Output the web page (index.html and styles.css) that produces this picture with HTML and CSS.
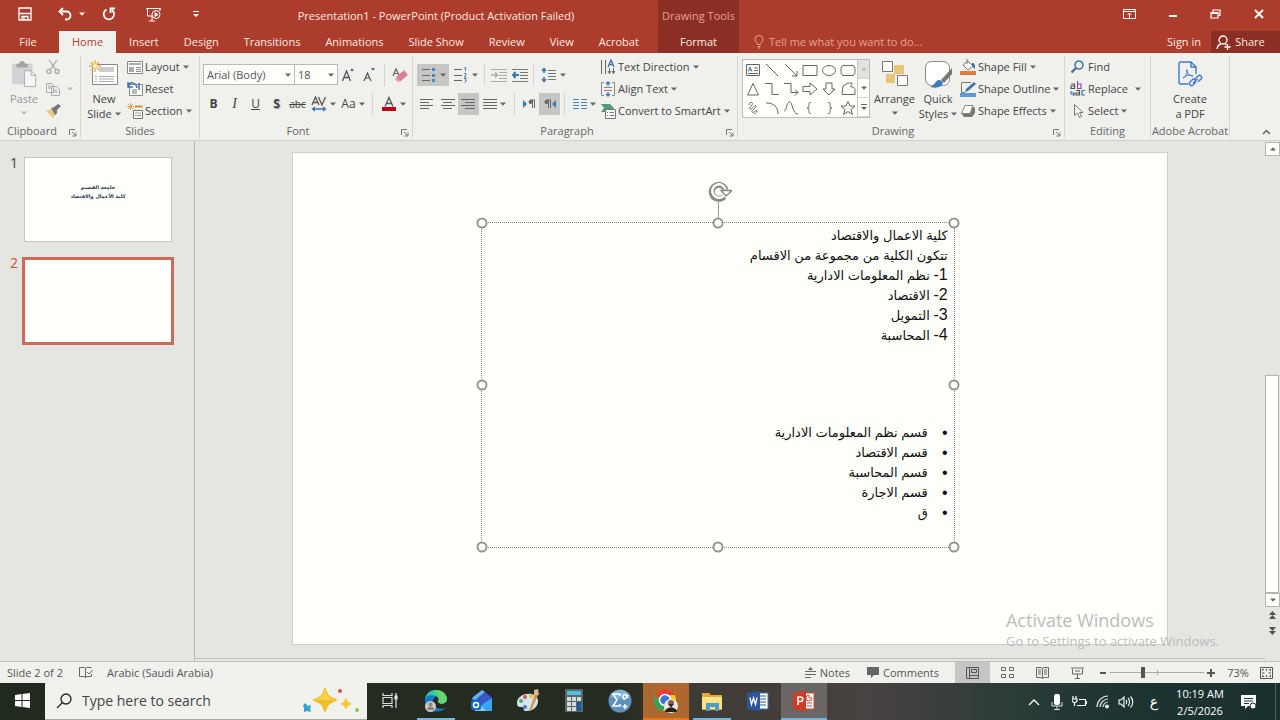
FILE: index.html
```html
<!DOCTYPE html>
<html lang="en">
<head>
<meta charset="utf-8">
<title>Presentation1 - PowerPoint</title>
<link rel="stylesheet" href="styles.css">
</head>
<body>
<svg class="sprite" aria-hidden="true">
  <symbol id="caret" viewBox="0 0 6 4"><path d="M0 0.5h6L3 3.7z" fill="currentColor"/></symbol>
  <symbol id="launch" viewBox="0 0 8 8"><path d="M0.5 6V0.5H6M3 3l3.5 3.5M7 3.5V7H3.5" fill="none" stroke="#777" /></symbol>
</svg>
<div class="app">
  <header class="header">
    <div class="head-left">
      <div class="title-row">
        <div class="qat">
          <button class="qbtn save" aria-label="Save"><svg width="14" height="14" viewBox="0 0 14 14" fill="none" stroke="#fff" stroke-width="1.3"><path d="M1 1h12v12H1zM1 6.500h12M4 13V9.500h6V13M6 10v3"/></svg></button>
          <button class="qbtn undo" aria-label="Undo"><svg width="14" height="14" viewBox="0 0 14 14" fill="none" stroke="#fff" stroke-width="1.8"><path d="M5 1L1.5 4.5 5 8M2 4.5h6.500a4 4 0 0 1 0 8H7"/></svg><svg class="caret"><use href="#caret"/></svg></button>
          <button class="qbtn redo" aria-label="Repeat"><svg width="14" height="14" viewBox="0 0 14 14" fill="none" stroke="#fff" stroke-width="1.8"><path d="M4.500 2.500A5.200 5.200 0 1 0 10 3M13 1.500H8.500v4.500"/></svg></button>
          <button class="qbtn show" aria-label="Start From Beginning"><svg width="17" height="15" viewBox="0 0 17 15" fill="none" stroke="#fff"><path d="M1 1.500h15M2.500 2v7H7M15 2v2M4 14h6M7 9v5"/><circle cx="11" cy="7.500" r="4"/><path d="M10 5.500v4l3-2z" fill="#fff"/></svg></button>
          <button class="qbtn more" aria-label="Customize Quick Access Toolbar"><svg width="6" height="8" viewBox="0 0 6 8"><path d="M0 1h6v1H0zM0 4h6L3 7z" fill="#fff"/></svg></button>
        </div>
        <h1 class="title">Presentation1 - PowerPoint (Product Activation Failed)</h1>
      </div>
      <nav class="tabs">
        <button class="tab file">File</button><button class="tab active">Home</button><button class="tab">Insert</button><button class="tab">Design</button><button class="tab">Transitions</button><button class="tab">Animations</button><button class="tab">Slide Show</button><button class="tab">Review</button><button class="tab">View</button><button class="tab">Acrobat</button>
      </nav>
    </div>
    <div class="context"><span class="ctx-title">Drawing Tools</span><button class="ctx-tab">Format</button></div>
    <div class="head-right">
      <div class="window-row">
        <button class="wbtn" aria-label="Ribbon Display Options"><svg width="13" height="10" viewBox="0 0 13 10" fill="none" stroke="#fff"><path d="M.5.5h12v9H.5zM1 2.500h11M6.500 9V4.500M4.500 6l2-2 2 2"/></svg></button>
        <button class="wbtn" aria-label="Minimize"><svg width="10" height="10" viewBox="0 0 10 10"><path d="M1 6h8v2H1z" fill="#fff"/></svg></button>
        <button class="wbtn" aria-label="Restore Down"><svg width="11" height="10" viewBox="0 0 11 10" fill="none" stroke="#fff" stroke-width="1.200"><path d="M1 3.500h7v5.500H1zM3 3V1h7v5.500H8M1 4.500h7"/></svg></button>
        <button class="wbtn" aria-label="Close"><svg width="10" height="10" viewBox="0 0 10 10" stroke="#fff" stroke-width="1.900"><path d="M1 1l8 8M9 1L1 9"/></svg></button>
      </div>
      <div class="tell-row">
        <button class="tell"><svg width="10" height="14" viewBox="0 0 10 14" fill="none" stroke="#e9a193"><path d="M3.500 9.500C3.500 7.500 1 7 1 4.500a4 4 0 0 1 8 0C9 7 6.500 7.500 6.500 9.500zM3.500 11.500h3M4 13h2"/></svg><span>Tell me what you want to do...</span></button>
        <button class="signin">Sign in</button>
        <button class="share"><svg width="15" height="15" viewBox="0 0 15 15" fill="none" stroke="#fff" stroke-width="1.300"><circle cx="7" cy="5" r="4"/><path d="M1 14c.5-3 2-4.500 4-5M9 9l1.500 1M11.500 9v6M8.500 12h6"/></svg><span>Share</span></button>
      </div>
    </div>
  </header>

  <section class="ribbon" aria-label="Home">
    <div class="group g-clip has-launch">
      <div class="body">
        <button class="big paste"><svg width="28" height="30" viewBox="0 0 28 30"><path d="M1 4h22v22H1z" fill="#d3d2d6"/><path d="M6 4h3a3 3 0 0 1 6 0h3v4H6z" fill="#a5a5a5"/><path d="M14.500 11.500h7l5 5v12h-12z" fill="#f5f5f5" stroke="#aaa"/><path d="M21.500 11.500v5h5" fill="none" stroke="#aaa"/></svg><span>Paste</span><svg class="caret"><use href="#caret"/></svg></button>
        <div class="stack">
          <button class="row" aria-label="Cut"><svg width="16" height="16" viewBox="0 0 16 16" fill="none" stroke="#aaa" stroke-width="1.300"><path d="M4 1l7 10M12 1L5 11"/><circle cx="4" cy="12.500" r="2"/><circle cx="12" cy="12.500" r="2"/></svg></button>
          <button class="row dim" aria-label="Copy"><svg width="16" height="16" viewBox="0 0 16 16" fill="#f2f2f2" stroke="#aaa"><path d="M1.500 2.500h5l2 2v7h-7zM6.500 5.500h5l3 3v6h-8z"/><path d="M8 9h4M8 11h5M3 5h3M3 7h3"/></svg><svg class="caret"><use href="#caret"/></svg></button>
          <button class="row" aria-label="Format Painter"><svg width="16" height="16" viewBox="0 0 16 16"><path d="M1 8l5-2 5 5-3 4z" fill="#ebc985"/><path d="M6 5l3-1 4-3 3 2-4 4v3l-2 2z" fill="#777"/></svg></button>
        </div>
      </div>
      <div class="glabel">Clipboard</div><button class="launch" aria-label="Clipboard options"><svg width="8" height="8"><use href="#launch"/></svg></button>
    </div>

    <div class="group g-slides">
      <div class="body">
        <button class="big newslide"><svg width="30" height="28" viewBox="0 0 30 28"><path d="M3.500 4.500h25v20h-25z" fill="#fff" stroke="#888"/><path d="M10 7h15v5H10z" fill="#ccc"/><path d="M6 16.500h2M10 16.500h15M6 19h2M10 19h15M6 21.500h2M10 21.500h15" stroke="#aaa"/><path d="M6 0v12M0 6h12M2 2l8 8M10 2l-8 8" stroke="#eab65c" stroke-width="1.500"/><circle cx="6" cy="6" r="2" fill="#fff3c8"/></svg><span>New</span><span class="two">Slide <svg class="caret"><use href="#caret"/></svg></span></button>
        <div class="stack">
          <button class="row"><svg width="16" height="16" viewBox="0 0 16 16"><path d="M.5 2.500h15v12H.5z" fill="#fff" stroke="#888"/><path d="M2 4h12v2H2zM2 8h5v5H2z" fill="#aaa"/><path d="M9 8.500h5M9 10.500h5M9 12.500h5" stroke="#888"/></svg><span>Layout</span><svg class="caret"><use href="#caret"/></svg></button>
          <button class="row"><svg width="16" height="16" viewBox="0 0 16 16"><path d="M2.500 3.500h13v11h-13z" fill="#fff" stroke="#888"/><path d="M5 8h5v5H5z" fill="#bbb"/><path d="M12 9V2M1 5c2-5 8-4 9 2M1 1v5h5" fill="none" stroke="#3d75ad" stroke-width="1.500"/></svg><span>Reset</span></button>
          <button class="row"><svg width="16" height="16" viewBox="0 0 16 16"><path d="M8 3.500h7.500" stroke="#d98c3c" stroke-width="2"/><path d="M6.500 7.500h9v8h-9z" fill="#fff" stroke="#777"/><path d="M8 10h6M8 12.500h6" stroke="#999"/><path d="M3.500 0v7M0 3.500h7M1 1l5 5M6 1L1 6" stroke="#e8a552"/></svg><span>Section</span><svg class="caret"><use href="#caret"/></svg></button>
        </div>
      </div>
      <div class="glabel">Slides</div>
    </div>

    <div class="group g-font has-launch">
      <div class="body lines">
        <div class="line">
          <label class="combo wide"><select aria-label="Font"><option>Arial (Body)</option></select><svg class="caret"><use href="#caret"/></svg></label><label class="combo"><select aria-label="Font size"><option>18</option></select><svg class="caret"><use href="#caret"/></svg></label>
          <button class="tool" aria-label="Increase font size"><svg width="15" height="16" viewBox="0 0 15 16" fill="none" stroke="#555" stroke-width="1.300"><path d="M1.500 14L5.500 4l4 10M3 10.500h5"/><path d="M9 4l2-3 2 3z" fill="#3d75ad" stroke="none"/></svg></button>
          <button class="tool" aria-label="Decrease font size"><svg width="15" height="16" viewBox="0 0 15 16" fill="none" stroke="#555" stroke-width="1.200"><path d="M2 14l3.500-8L9 14M3 11h5"/><path d="M9 1l2 3 2-3z" fill="#3d75ad" stroke="none"/></svg></button>
          <i class="sep"></i>
          <button class="tool" aria-label="Clear formatting"><svg width="16" height="16" viewBox="0 0 16 16" fill="none" stroke="#666" stroke-width="1.200"><path d="M1 9l3-7 3 6M2 6.500h4"/><path d="M5 10l7-6 3 4-7 6z" fill="#dd7f9b" stroke="#d77e97"/><path d="M3.500 11l3 3.500" stroke="#e3a2b3" stroke-width="2"/></svg></button>
        </div>
        <div class="line">
          <button class="tool t"><b>B</b></button><button class="tool t it"><i>I</i></button><button class="tool t"><u>U</u></button><button class="tool t sh">S</button><button class="tool t st"><s>abc</s></button>
          <button class="tool drop av" aria-label="Character spacing"><svg width="16" height="16" viewBox="0 0 16 16" fill="none" stroke="#555" stroke-width="1.300"><path d="M1 9l3.500-8L8 9M2.500 6.500h4M7.500 1L11 9l3.500-8"/><path d="M2 13h12M4 11l-2.500 2L4 15M12 11l2.500 2-2.500 2" stroke="#3d75ad"/></svg><svg class="caret"><use href="#caret"/></svg></button>
          <button class="tool drop aa">Aa<svg class="caret"><use href="#caret"/></svg></button>
          <i class="sep"></i>
          <button class="tool drop" aria-label="Font color"><svg width="16" height="16" viewBox="0 0 16 16" fill="none" stroke="#555" stroke-width="1.300"><path d="M4 10.500l4-9 4 9M5.500 7.500h5"/><path d="M1 11h14v4H1z" fill="#c00010" stroke="none"/></svg><svg class="caret"><use href="#caret"/></svg></button>
        </div>
      </div>
      <div class="glabel">Font</div><button class="launch" aria-label="Font options"><svg width="8" height="8"><use href="#launch"/></svg></button>
    </div>

    <div class="group g-para has-launch">
      <div class="body">
        <div class="lines">
          <div class="line">
            <button class="tool drop on" aria-label="Bullets"><svg width="16" height="16" viewBox="0 0 16 16"><path d="M1 2.500h8M1 8.500h8M1 13.500h8" stroke="#666"/><path d="M11 1h3v3h-3zM11 7h3v3h-3zM11 12h3v3h-3z" fill="#4a86b8"/></svg><svg class="caret"><use href="#caret"/></svg></button>
            <button class="tool drop" aria-label="Numbering"><svg width="16" height="16" viewBox="0 0 16 16" fill="none"><path d="M1 2.500h8M1 8.500h8M1 13.500h8" stroke="#666"/><path d="M11 1l1.500-.5V4M11 6.500h2v1.500l-2 2h2.500M11 11.500h2.500L12 13l1.500 1-2 1.500" stroke="#4a86b8"/></svg><svg class="caret"><use href="#caret"/></svg></button>
            <i class="sep tight"></i>
            <button class="tool" aria-label="Decrease list level"><svg width="16" height="14" viewBox="0 0 16 14" fill="none" stroke="#aaa"><path d="M0 1.500h16M8 4.500h8M8 7.500h8M8 10.500h8M0 13.500h16"/><path d="M0 7h6M4 4.500L6.500 7 4 9.500" stroke-width="1.500"/></svg></button>
            <button class="tool" aria-label="Increase list level"><svg width="16" height="14" viewBox="0 0 16 14" fill="none" stroke="#777"><path d="M0 1.500h16M8 4.500h8M8 7.500h8M8 10.500h8M0 13.500h16"/><path d="M7 7H1M3.500 4L1 7l2.500 3" stroke="#3d75ad" stroke-width="2"/></svg></button>
            <i class="sep tight"></i>
            <button class="tool drop" aria-label="Line spacing"><svg width="16" height="16" viewBox="0 0 16 16" fill="none" stroke="#777"><path d="M7 3.500h8M7 6.500h8M7 9.500h8M7 12.500h8"/><path d="M3 2v4M3 10v4M1 4l2-2.500L5 4M1 12l2 2.500L5 12" stroke="#3d75ad" stroke-width="1.500"/></svg><svg class="caret"><use href="#caret"/></svg></button>
          </div>
          <div class="line">
            <button class="tool" aria-label="Align left"><svg width="14" height="12" viewBox="0 0 14 12" stroke="#666"><path d="M0 1.500h13M0 4.500h9M0 7.500h13M0 10.500h9"/></svg></button>
            <button class="tool" aria-label="Center"><svg width="14" height="12" viewBox="0 0 14 12" stroke="#666"><path d="M0 1.500h14M2 4.500h9M0 7.500h14M2 10.500h9"/></svg></button>
            <button class="tool on" aria-label="Align right"><svg width="14" height="12" viewBox="0 0 14 12" stroke="#666"><path d="M0 1.500h14M4 4.500h10M0 7.500h14M4 10.500h10"/></svg></button>
            <button class="tool drop" aria-label="Justify"><svg width="14" height="12" viewBox="0 0 14 12" stroke="#666"><path d="M0 1.500h14M0 4.500h14M0 7.500h14M0 10.500h14"/></svg><svg class="caret"><use href="#caret"/></svg></button>
            <i class="sep"></i>
            <button class="tool" aria-label="Left to right"><svg width="14" height="10" viewBox="0 0 14 10"><path d="M1 1l4 4-4 4z" fill="#3d75ad"/><path d="M8 1h5M10.500 1v8M12.500 1v8" stroke="#666"/><circle cx="8.500" cy="3" r="2" fill="#666"/></svg></button>
            <button class="tool on" aria-label="Right to left"><svg width="14" height="10" viewBox="0 0 14 10"><path d="M13 1L9 5l4 4z" fill="#3d75ad"/><path d="M3 1h5M5.500 1v8M7.500 1v8" stroke="#666"/><circle cx="3.500" cy="3" r="2" fill="#666"/></svg></button>
            <i class="sep"></i>
            <button class="tool drop" aria-label="Columns"><svg width="14" height="12" viewBox="0 0 14 12" stroke="#4a86b8"><path d="M0 1.500h6M8 1.500h6M0 4.500h6M8 4.500h6M0 7.500h6M8 7.500h6M0 10.500h6M8 10.500h6"/></svg><svg class="caret"><use href="#caret"/></svg></button>
          </div>
        </div>
        <div class="stack">
          <button class="row"><svg width="16" height="16" viewBox="0 0 16 16" fill="none" stroke="#666"><path d="M1.500 1v14M5.500 1v14M9.500 9v6M13.500 9v6M8 12l1.500 2.500L11 12M12 12l1.500 2.500L15 12"/><path d="M8 8l3-7 3 7M9 5.500h4" stroke="#3d75ad" stroke-width="1.400"/></svg><span>Text Direction</span><svg class="caret"><use href="#caret"/></svg></button>
          <button class="row"><svg width="16" height="16" viewBox="0 0 16 16" fill="none" stroke="#888"><path d="M4 1.500H1.500v13H4M12 1.500h2.500v13H12M4 6.500h8M4 9.500h8"/><path d="M8 1v4M8 11v4M6 3l2-2 2 2M6 13l2 2 2-2" stroke="#3d75ad" stroke-width="1.300"/></svg><span>Align Text</span><svg class="caret"><use href="#caret"/></svg></button>
          <button class="row"><svg width="16" height="16" viewBox="0 0 16 16"><path d="M1 1h9l4 4-3 4H1l3-4z" fill="#559a7c"/><path d="M5.500 6.500h10v9h-10z" fill="#fff" stroke="#777"/><path d="M7 9.500h1M9.500 9.500H14M7 12.500h1M9.500 12.500H14" stroke="#777"/></svg><span>Convert to SmartArt</span><svg class="caret"><use href="#caret"/></svg></button>
        </div>
      </div>
      <div class="glabel">Paragraph</div><button class="launch" aria-label="Paragraph options"><svg width="8" height="8"><use href="#launch"/></svg></button>
    </div>

    <div class="group g-draw has-launch">
      <div class="body">
        <div class="gallery">
          <div class="shapes">
            <button aria-label="Text box"><svg viewBox="0 0 16 14"><path d="M1.500 1.500h13v11h-13zM9 5h4M9 7.500h4M3 10.500h10"/><path d="M3 8.500L5 4l2 4.500M4 7h2.500" stroke="#3d75ad"/></svg></button><button aria-label="Line"><svg viewBox="0 0 16 14"><path d="M2 1l12 12"/></svg></button><button aria-label="Arrow"><svg viewBox="0 0 16 14"><path d="M2 1l12 12M14 8v5H9"/></svg></button><button aria-label="Rectangle"><svg viewBox="0 0 16 14"><path d="M1 2.500h14v10H1z"/></svg></button><button aria-label="Oval"><svg viewBox="0 0 16 14"><ellipse cx="8" cy="7.500" rx="6.500" ry="5"/></svg></button><button aria-label="Rounded rectangle"><svg viewBox="0 0 16 14"><rect x="1" y="2.500" width="14" height="10" rx="3"/></svg></button>
            <button aria-label="Triangle"><svg viewBox="0 0 16 14"><path d="M8 1.500L13.500 13h-11z"/></svg></button><button aria-label="Elbow"><svg viewBox="0 0 16 14"><path d="M1 1.500h7v11h7"/></svg></button><button aria-label="Elbow arrow"><svg viewBox="0 0 16 14"><path d="M1 1.500h7v9h7M12 7.500l3 3-3 3"/></svg></button><button aria-label="Right arrow"><svg viewBox="0 0 16 14"><path d="M1 4.500h7V1l7 6-7 6V9.500H1z"/></svg></button><button aria-label="Down arrow"><svg viewBox="0 0 16 14"><path d="M5 1h6v6h3l-6 6-6-6h3z"/></svg></button><button aria-label="Freeform"><svg viewBox="0 0 16 14"><path d="M3 4l5-3h4c0 3-3 4 0 4s3 2 3 4v3.500H2z"/></svg></button>
            <button aria-label="Scribble"><svg viewBox="0 0 16 14"><path d="M4 4C4 0 9 1 7 4S3 7 5 8s5-5 6-3-5 4-4 6 5-3 5-1-3 3-3 3"/></svg></button><button aria-label="Arc"><svg viewBox="0 0 16 14"><path d="M2 2c8 0 12 4 12 11"/></svg></button><button aria-label="Curve"><svg viewBox="0 0 16 14"><path d="M1 10C4 10 3 1 6.500 1S9 13 15 13"/></svg></button><button aria-label="Left brace"><svg viewBox="0 0 16 14"><path d="M9 1.500c-3 0-2 2-2 3.500S6 7 5 7c1 0 2 .5 2 2s-1 3.500 2 3.500"/></svg></button><button aria-label="Right brace"><svg viewBox="0 0 16 14"><path d="M7 1.500c3 0 2 2 2 3.500s1 2 2 2c-1 0-2 .5-2 2s1 3.500-2 3.500"/></svg></button><button aria-label="Star"><svg viewBox="0 0 16 14"><path d="M8 .5l2 4.500h5l-4 3.500 1.500 5L8 10.500l-4.500 3 1.500-5L1 5h5z"/></svg></button>
          </div>
          <div class="gscroll"><button class="off" aria-label="Row up"><svg class="caret up"><use href="#caret"/></svg></button><button aria-label="Row down"><svg class="caret"><use href="#caret"/></svg></button><button aria-label="More shapes"><svg width="6" height="7" viewBox="0 0 6 7"><path d="M0 0h6v1H0zM0 3h6L3 6z" fill="#666"/></svg></button></div>
        </div>
        <button class="big arrange"><svg width="26" height="28" viewBox="0 0 26 28"><path d="M12 5h10v9H12zM4 14h9v9H4z" fill="#e9c578"/><path d="M.5 1.500h10v10H.5zM15.500 15.500h10v10h-10z" fill="#fff" stroke="#777"/></svg><span>Arrange</span><svg class="caret"><use href="#caret"/></svg></button>
        <button class="big quick"><svg width="28" height="28" viewBox="0 0 28 28"><rect x="1.500" y="1.500" width="24" height="24" rx="6" fill="#fff" stroke="#888"/><path d="M28 8v6l-8 9-3-3z" fill="#777"/><path d="M6 27c5-1 5-7 9-7s5 4 2 6-7 2-11 1z" fill="#4379b4"/></svg><span>Quick</span><span class="two">Styles <svg class="caret"><use href="#caret"/></svg></span></button>
        <div class="stack">
          <button class="row"><svg width="16" height="16" viewBox="0 0 16 16"><path d="M0 12h16v4H0z" fill="#de7c3c"/><path d="M3 6l5-4 5 5-5 4zM7 5V0" fill="#fff" stroke="#777" /><path d="M12 4c3 0 3 2 3 6-2-1-2-3-3-3z" fill="#3d6da0"/></svg><span>Shape Fill</span><svg class="caret"><use href="#caret"/></svg></button>
          <button class="row"><svg width="16" height="16" viewBox="0 0 16 16"><path d="M0 12h16v4H0z" fill="#5b9bd5"/><path d="M11 1.500H1.500v10H5" fill="none" stroke="#777"/><path d="M5 11l1-3 8-7 2 2-8 7z" fill="#3d75ad"/></svg><span>Shape Outline</span><svg class="caret"><use href="#caret"/></svg></button>
          <button class="row"><svg width="16" height="16" viewBox="0 0 16 16"><path d="M1 10l3 4h8l3-4V5l-3-2z" fill="#777"/><path d="M5 2.500h8l-3 8H1.500z" fill="#fff" stroke="#888"/></svg><span>Shape Effects</span><svg class="caret"><use href="#caret"/></svg></button>
        </div>
      </div>
      <div class="glabel">Drawing</div><button class="launch" aria-label="Drawing options"><svg width="8" height="8"><use href="#launch"/></svg></button>
    </div>

    <div class="group g-edit">
      <div class="body">
        <div class="stack">
          <button class="row"><svg width="16" height="16" viewBox="0 0 16 16" fill="none" stroke="#3d75ad" stroke-width="1.600"><circle cx="9" cy="6" r="4"/><path d="M6 9l-4.500 4.500" stroke-width="2.400"/></svg><span>Find</span></button>
          <button class="row rep"><svg width="16" height="16" viewBox="0 0 16 16" fill="none" stroke="#555" stroke-width="1.200"><path d="M1 3h3.500v4.500H1V5h3.500"/><path d="M7.500 0v7.500H11V3H7.500" stroke="#8e44ad"/><path d="M6 9.500h3.500V14H6v-2h3.500"/><path d="M15 9.500h-3V14h3M1 10v3h3M3 11l1.500 2L3 15" stroke="#3d75ad"/></svg><span>Replace</span><svg class="caret"><use href="#caret"/></svg></button>
          <button class="row"><svg width="16" height="16" viewBox="0 0 16 16"><path d="M4.500 1.500v11l3-2.500 2 4.500 2-1-2-4H13z" fill="#fff" stroke="#777"/></svg><span>Select</span><svg class="caret"><use href="#caret"/></svg></button>
        </div>
      </div>
      <div class="glabel">Editing</div>
    </div>

    <div class="group g-pdf">
      <div class="body">
        <button class="big pdf"><svg width="26" height="28" viewBox="0 0 26 28" fill="none" stroke="#3f78d0" stroke-width="1.400"><path d="M11 24H4a2 2 0 0 1-2-2V4a2 2 0 0 1 2-2h10l5 5v7M14 2v5h5"/><path d="M6 18c4-2 5-6 4-8s-1 6 6 6c-4-2-7 0-10 2z" stroke-width="1"/><path d="M18 19l3-3c2-2 5 1 3 3l-3 3M19 20l-3-1-3 3c-2 2 1 5 3 3l3-3M16 23l5-4"/></svg><span>Create</span><span class="two">a PDF</span></button>
      </div>
      <div class="glabel">Adobe Acrobat</div>
    </div>
    <button class="collapse" aria-label="Collapse the Ribbon"><svg width="9" height="6" viewBox="0 0 9 6" fill="none" stroke="#666" stroke-width="1.500"><path d="M1 5l3.500-3.500L8 5"/></svg></button>
  </section>

  <main class="work">
    <aside class="panel">
      <div class="thumb-row"><span class="num">1</span><button class="thumb"><span class="mini" dir="rtl" lang="ar">جامعة القصيم<br>كلية الأعمال والاقتصاد</span></button></div>
      <div class="thumb-row sel"><span class="num">2</span><button class="thumb" aria-label="Slide 2"></button></div>
    </aside>
    <div class="canvas">
      <div class="slide">
        <div class="textbox">
          <svg class="rot" width="26" height="42" viewBox="0 0 26 42" fill="none"><path d="M12.500 22v20" stroke="#999"/><path d="M18 16.500a7 7 0 1 1 1.500-6.500" stroke="#8a8a88" stroke-width="6"/><path d="M17.500 16a6.700 6.700 0 1 1 2-6.500" stroke="#fffffc" stroke-width="2.500"/><path d="M15 10.500h11l-6 5.500z" fill="#fffffc" stroke="#8a8a88" stroke-width="1.400"/></svg>
          <div class="copy" dir="rtl" lang="ar">
            <p>كلية الاعمال والاقتصاد</p><p>تتكون الكلية من مجموعة من الاقسام</p><p><span class="n">1-</span> نظم المعلومات الادارية</p><p><span class="n">2-</span> الاقتصاد</p><p><span class="n">3-</span> التمويل</p><p><span class="n">4-</span> المحاسبة</p>
            <ul><li>قسم نظم المعلومات الادارية</li><li>قسم الاقتصاد</li><li>قسم المحاسبة</li><li>قسم الاجارة</li><li>ق</li></ul>
          </div>
          <i class="h tl"></i><i class="h tc"></i><i class="h tr"></i><i class="h ml"></i><i class="h mr"></i><i class="h bl"></i><i class="h bc"></i><i class="h br"></i>
        </div>
      </div>
    </div>
    <div class="scroll">
      <button class="sbtn" aria-label="Scroll up"><svg class="caret up"><use href="#caret"/></svg></button>
      <div class="track"><div class="knob"></div></div>
      <button class="sbtn" aria-label="Scroll down"><svg class="caret"><use href="#caret"/></svg></button>
      <button class="jump" aria-label="Previous slide"><svg width="7" height="8" viewBox="0 0 7 8"><path d="M0 4l3.500-4L7 4zM0 8l3.500-4L7 8z" fill="#555"/></svg></button>
      <button class="jump" aria-label="Next slide"><svg width="7" height="8" viewBox="0 0 7 8"><path d="M0 0h7L3.500 4zM0 4h7L3.500 8z" fill="#555"/></svg></button>
    </div>
    <div class="watermark"><div class="w1">Activate Windows</div><div class="w2">Go to Settings to activate Windows.</div></div>
  </main>

  <footer class="status">
    <span class="st-slide">Slide 2 of 2</span>
    <svg class="spell" width="14" height="13" viewBox="0 0 14 13" fill="none" stroke="#666"><path d="M6.500 11.500L5 10.500H.5v-9H5l1.500 1 1.500-1h4.500M6.500 2.500v9l1.500-1h4.500V8M8 6l2 2 4-4.500"/></svg>
    <span class="st-lang">Arabic (Saudi Arabia)</span>
    <button class="sb notes"><svg width="11" height="11" viewBox="0 0 11 11"><path d="M3 3l2.500-3L8 3z" fill="#666"/><path d="M0 4.500h11M0 7.500h11M0 10.500h6" stroke="#666"/></svg><span>Notes</span></button>
    <button class="sb comm"><svg width="12" height="11" viewBox="0 0 12 11"><path d="M0 0h12v8H7l-3 3V8H0z" fill="#666"/></svg><span>Comments</span></button>
    <button class="view on" aria-label="Normal"><svg width="13" height="12" viewBox="0 0 13 12" fill="none" stroke="#555"><path d="M.5.5h12v11H.5zM3.500 1v10M4 8.500h8M5.500 2.500h5v3h-5z"/></svg></button>
    <button class="view" aria-label="Slide Sorter"><svg width="13" height="12" viewBox="0 0 13 12" fill="none" stroke="#666"><path d="M.5.5h4v3h-4zM8.500.5h4v3h-4zM.5 7.500h4v3h-4zM8.500 7.500h4v3h-4z"/></svg></button>
    <button class="view" aria-label="Reading View"><svg width="13" height="12" viewBox="0 0 13 12" fill="none" stroke="#666"><path d="M6.500 11.500V1.500L5 .5H.5v10H5zM6.500 11.500L8 10.500h4.500V.5H8l-1.500 1M2 3h3M2 5h3M2 7h3M8 3h3M8 5h3M8 7h3"/></svg></button>
    <button class="view" aria-label="Slide Show"><svg width="13" height="12" viewBox="0 0 13 12" fill="none" stroke="#666"><path d="M0 1h13M1.500 2v5h10V2M6.500 7v4M4 11.500h5M4 4h5"/></svg></button>
    <button class="zb" aria-label="Zoom out"><svg width="7" height="8" viewBox="0 0 7 8"><path d="M0 3h6v2H0z" fill="#555"/></svg></button>
    <input class="zoom" type="range" min="0" max="100" value="35" aria-label="Zoom">
    <button class="zb" aria-label="Zoom in"><svg width="8" height="8" viewBox="0 0 8 8"><path d="M0 3h8v2H0zM3 0h2v8H3z" fill="#555"/></svg></button>
    <button class="pct">73%</button>
    <button class="fit" aria-label="Fit slide"><svg width="13" height="12" viewBox="0 0 13 12" fill="none" stroke="#555"><path d="M.5.5h12v11H.5zM6.500 2v2M6.500 8v2M2 6h2.500M8.500 6H11M2.500 4V2.500H4M9 2.500h1.500V4M2.500 8v1.500H4M9 9.500h1.500V8"/></svg></button>
  </footer>

  <div class="taskbar">
    <button class="tb start" aria-label="Start"><svg width="15" height="15" viewBox="0 0 15 15" fill="#fff"><path d="M0 2l6.500-1v6H0zM7.500 1L15 0v7H7.500zM0 8h6.500v6L0 13zM7.500 8H15v7l-7.500-1z"/></svg></button>
    <label class="search"><svg width="16" height="16" viewBox="0 0 16 16" fill="none" stroke="#222" stroke-width="1.300"><circle cx="10" cy="6" r="5"/><path d="M6.500 9.500L1 15"/></svg><input type="text" placeholder="Type here to search" aria-label="Search"><svg width="58" height="26" viewBox="0 0 58 26"><path d="M23 1c2 7 3 8 11 11-8 3-9 4-11 11-2-7-3-8-11-11 8-3 9-4 11-11z" fill="#f2bd2a" stroke="#f2bd2a" stroke-width="2" stroke-linejoin="round"/><path d="M23 1c2 7 3 8 11 11H12c8-3 9-4 11-11z" fill="#fbd348"/><path d="M44 10c1 4 2 4 5 6-3 1-4 2-5 5-1-3-2-4-5-5 3-2 4-2 5-6z" fill="#f5c838" stroke="#f5c838"/><path d="M3 15l3 3 3-1-1 4 1 3-4-1-3 1 0-4-1-2z" fill="#2fa5cf"/><circle cx="38" cy="3" r="2" fill="#d4553c"/><circle cx="55" cy="22" r="2" fill="#8cc653"/></svg></label>
    <button class="tb" aria-label="Task View"><svg width="16" height="15" viewBox="0 0 16 15" fill="none" stroke="#ddd" stroke-width="1.200"><path d="M1 0v2.500h9V0M1 4.500h9v6H1zM1 15v-2.500h9V15M14 0v15"/><path d="M13 3h2v3h-2z" fill="#fff"/></svg></button>
    <button class="tb run" aria-label="Edge"><svg width="24" height="24" viewBox="0 0 24 24"><path d="M1 11C2 4 6 1 12 1c7 0 11 5 11 9 0 5-7 6-9 3 3-5-5-10-13-2z" fill="#32c8aa"/><path d="M12 1c7 0 11 5 11 9 0 5-7 6-9 3 2-3 1-9-5-11z" fill="#65d56b"/><path d="M1 12c0-6 7-7 11-4-4 1-5 8 1 11 3 1 6 1 8 0-4 6-20 5-20-7z" fill="#167bc5"/><circle cx="6.500" cy="17.500" r="5.500" fill="#ccc8c5"/><circle cx="6.500" cy="15.500" r="2" fill="#8d8580"/><path d="M3 21c0-5 7-5 7 0z" fill="#8d8580"/></svg></button>
    <button class="tb" aria-label="Outlook"><svg width="24" height="24" viewBox="0 0 24 24"><path d="M2 9L12 1l10 8v12H2z" fill="#2367c8"/><path d="M6 9l9-6 7 6-9 7z" fill="#3c55c8"/><path d="M2 9L12 1l3 2-10 8z" fill="#5fb4f5"/><path d="M22 9v13H7l6-7z" fill="#3aa5f0"/><path d="M5 11l11 11H5z" fill="#7fd4fb"/><rect x="1" y="11" width="10" height="10" rx="2" fill="#1166be"/><circle cx="6" cy="16" r="2.500" fill="none" stroke="#fff" stroke-width="1.500"/></svg></button>
    <button class="tb" aria-label="Paint"><svg width="24" height="24" viewBox="0 0 24 24"><path d="M1 14C1 3 22 1 22 12c0 6-5 10-12 10-4 0-1-4-4-4s-5 0-5-4z" fill="#d3e5ed"/><circle cx="5" cy="12" r="2" fill="#4fae54"/><circle cx="9" cy="8" r="2" fill="#d75649"/><circle cx="15" cy="7" r="2" fill="#efbf3d"/><circle cx="9" cy="18" r="2" fill="#4577c5"/><path d="M13 22l6-17 3 1-7 16z" fill="#d49748"/><path d="M18 6V1l4-1 1 6z" fill="#d9b791"/></svg></button>
    <button class="tb" aria-label="Calculator"><svg width="18" height="23" viewBox="0 0 18 23"><path d="M0 0h18v23H0z" fill="#5b666a"/><path d="M2 2h14v4H2z" fill="#49c3e5"/><path d="M2 8h4v4H2zM7 8h4v4H7zM12 8h4v4h-4zM2 13h4v4H2zM7 13h4v4H7zM2 18h4v4H2zM7 18h4v4H7z" fill="#d5dadd"/><path d="M12 13h4v9h-4z" fill="#1c5c9d"/></svg></button>
    <button class="tb" aria-label="Math"><svg width="24" height="24" viewBox="0 0 24 24" fill="none"><circle cx="12" cy="12" r="11.500" fill="#5c93be"/><path d="M2 7C6-1 18-1 22 7c-6 2-14 5-20 0z" fill="#83b2d3"/><path d="M12 7V5H5l4 6-4 6h7v-2M20 6c-2 5-5 5-5 2s3-4 5 1M17 15v5M14.500 17.500h5" stroke="#fff" stroke-width="1.500"/></svg></button>
    <button class="tb hot" aria-label="Chrome"><svg width="26" height="26" viewBox="0 0 26 26"><circle cx="12" cy="12" r="11" fill="#f4c52c"/><path d="M2 7C6-1 18-1 22 7H12L7 14z" fill="#e34134"/><path d="M2 7l6 8 4 3-2 5C2 22-1 14 2 7z" fill="#32a352"/><circle cx="12" cy="12" r="5.500" fill="#3974d7" stroke="#fff" stroke-width="1.500"/><circle cx="18" cy="18" r="7" fill="#eee8e4"/><path d="M12 24c0-6 12-6 12 0z" fill="#222"/><circle cx="18" cy="15" r="3" fill="#875b45"/><path d="M15.500 16h5l-2.500 4z" fill="#332721"/></svg></button>
    <button class="tb run" aria-label="File Explorer"><svg width="22" height="20" viewBox="0 0 22 20"><path d="M1 2h7l2 2h11v15H1z" fill="#e3ab38"/><path d="M1 6h20v12H1z" fill="#fae287"/><path d="M5 20v-8h13v8h-4v-4H9v4z" fill="#4a9dce"/></svg></button>
    <button class="tb" aria-label="Word"><svg width="22" height="20" viewBox="0 0 22 20"><path d="M9 2h12v16H9z" fill="#fff" stroke="#4a73b5"/><path d="M12 5h7M12 8h7M12 11h7M12 14h7" stroke="#2b579a"/><path d="M0 2l13-2v20L0 18z" fill="#2b579a"/><path d="M3 6.500l1.500 7L6.500 7l2 6.500 1.500-7" fill="none" stroke="#fff" stroke-width="1.300"/></svg></button>
    <button class="tb run cur" aria-label="PowerPoint"><svg width="22" height="20" viewBox="0 0 22 20"><path d="M9 2h12v16H9z" fill="#fff" stroke="#d24b35"/><path d="M14 12h5M14 15h5M16 4a3 3 0 1 0 3 3h-3z" stroke="#d24b35" fill="none"/><path d="M0 2l13-2v20L0 18z" fill="#d13a26"/><path d="M5 14V6h2.500a2 2 0 0 1 0 4.500H5" fill="none" stroke="#fff" stroke-width="1.600"/></svg></button>
    <div class="tray">
      <button class="ti" aria-label="Show hidden icons"><svg width="12" height="8" viewBox="0 0 12 8" fill="none" stroke="#fff" stroke-width="1.300"><path d="M1 7l5-5 5 5"/></svg></button>
      <button class="ti" aria-label="Microphone"><svg width="12" height="16" viewBox="0 0 12 16"><rect x="3" y="0" width="6" height="11" rx="2" fill="#fff"/><path d="M1 8v4h10V8M6 12v3M3 15.500h6" fill="none" stroke="#ddd"/></svg></button>
      <button class="ti" aria-label="Battery"><svg width="15" height="12" viewBox="0 0 15 12" fill="none" stroke="#fff" stroke-width="1.200"><path d="M7 3.500h6.500v6H5M1 0v3M4 0v3M0 3h5v2L3.500 6.500h-2L0 5zM2.500 6.500V10"/><path d="M14.500 5v3"/></svg></button>
      <button class="ti" aria-label="Network"><svg width="14" height="14" viewBox="0 0 14 14" fill="none" stroke="#ddd" stroke-width="1.200"><path d="M1 12C1 6 6 1 12 1M4 12c0-4 4-8 8-8M7 12c0-3 3-5 5-5"/><circle cx="11" cy="11.500" r="1.500" fill="#fff"/></svg></button>
      <button class="ti" aria-label="Volume"><svg width="16" height="14" viewBox="0 0 16 14" fill="none" stroke="#fff" stroke-width="1.100"><path d="M1 5h2l3-3v10L3 9H1zM8 5c1 1 1 3 0 4M10 3c2 2 2 6 0 8M12.500 1.500c3 3 3 8 0 11"/></svg></button>
      <button class="ti lang" lang="ar">ع</button>
      <div class="clock"><span>10:19 AM</span><span>2/5/2026</span></div>
      <button class="ti note" aria-label="Notifications"><svg width="16" height="16" viewBox="0 0 16 16"><path d="M0 1h15v11H7l-3 3v-3H0z" fill="#fff"/><path d="M3 4.500h9M3 7h9M3 9.500h5" stroke="#1d3431"/><circle cx="12" cy="12" r="3" fill="#fff" stroke="#1d3431"/></svg></button>
    </div>
  </div>
</div>
</body>
</html>
```

FILE: styles.css
```css
* { box-sizing: border-box; }
body { margin: 0; font-family: "Open Sans", "Noto Sans", sans-serif; font-size: 11px; line-height: 16px; color: #444; }
button { border: 0; background: none; padding: 0; margin: 0; font: inherit; color: inherit; display: flex; align-items: center; justify-content: center; white-space: nowrap; }
svg { display: block; flex: none; }
p, ul, h1 { margin: 0; padding: 0; }
.sprite { position: absolute; width: 0; height: 0; }
.caret { width: 6px; height: 4px; color: #666; }
.up { transform: rotate(180deg); }
.app { height: 100vh; min-width: 1240px; display: flex; flex-direction: column; overflow: hidden; background: #e5e6e2; }

/* Title bar and tabs */
.header { display: flex; flex: none; height: 53px; background: #ac3c2b; color: #ffeae2; }
.head-left { width: 658px; }
.title-row { display: flex; height: 31px; }
.qat { display: flex; align-items: center; width: 214px; height: 28px; padding-left: 18px; }
.qbtn { gap: 7px; }
.qbtn .caret { color: #fff; }
.undo { margin-left: 26px; }
.redo { margin-left: 17px; }
.show { margin-left: 29px; }
.more { margin-left: 31px; }
.title { flex: 1; font-size: 11px; font-weight: 400; text-align: center; line-height: 31px; }
.tabs { display: flex; height: 22px; }
.tab { padding: 0 12px 0 13px; }
.tab.file { width: 55px; margin-right: 4px; }
.tab.active { padding: 0 13px; background: #f0f1ed; color: #b5422e; }
.context { width: 81px; background: #8b2f24; display: flex; flex-direction: column; align-items: center; }
.ctx-title { line-height: 31px; color: #e9a193; }
.ctx-tab { height: 22px; }
.head-right { flex: 1; }
.window-row { display: flex; justify-content: flex-end; height: 31px; padding-bottom: 3px; }
.wbtn { width: 43px; }
.tell-row { display: flex; height: 22px; }
.tell { gap: 5px; margin-left: 15px; margin-right: auto; color: #e9a193; }
.signin { padding: 0 10px; }
.share { width: 69px; background: #8b2f24; gap: 4px; padding-right: 10px; }

/* Ribbon */
.ribbon { display: flex; flex: none; height: 88px; background: #f0f1ed; border-bottom: 1px solid #d0d1cd; padding-top: 3px; }
.group { position: relative; display: flex; flex-direction: column; border-right: 1px solid #d6d7d3; margin-bottom: 2px; }
.body { display: flex; flex: none; height: 68px; }
.glabel { text-align: center; line-height: 14px; color: #666; }
.has-launch .glabel { padding-right: 16px; }
.launch { position: absolute; right: 3px; bottom: 1px; }
.g-clip { width: 81px; }
.g-slides { width: 119px; }
.g-font { width: 213px; }
.g-para { width: 325px; }
.g-draw { width: 327px; }
.g-edit { width: 86px; }
.g-pdf { width: 79px; }
.stack { display: flex; flex-direction: column; }
.row { height: 22px; justify-content: flex-start; gap: 2px; }
.row span { margin-right: 1px; }
.dim .caret { color: #bbb; margin-left: 4px; }
.rep .caret { margin-left: 4px; }
.big { flex-direction: column; justify-content: flex-start; line-height: 15px; padding-top: 4px; }
.big > svg:first-child { height: 28px; margin-bottom: 3px; }
.big > .caret { margin-top: 5px; }
.big .two { display: flex; align-items: center; gap: 3px; }
.paste { width: 45px; color: #999; padding-left: 3px; }
.paste .caret { color: #bbb; }
.newslide { width: 46px; }
.lines { display: flex; flex-direction: column; padding: 8px 0 0 3px; gap: 7px; }
.line { display: flex; height: 22px; }
.tool { width: 21px; }
.drop { width: 32px; gap: 3px; }
.on { background: #c6c6c4; }
.sep { width: 1px; margin: 0 4px; background: #d3d4d0; }
.sep.tight { margin: 0 3px; }
.combo { position: relative; width: 44px; height: 21px; }
.combo.wide { width: 92px; margin-right: -1px; }
.combo select { appearance: none; width: 100%; height: 21px; border: 1px solid #b9bab7; border-radius: 0; background: #fffffc; font: inherit; color: #555; padding: 0 3px; }
.combo .caret { position: absolute; right: 4px; top: 9px; pointer-events: none; }
.t { font-size: 12px; }
.it { font-family: "Liberation Serif", serif; font-size: 14px; }
.sh { font-weight: 700; text-shadow: 1px 1px 1px #999; }
.st { font-size: 10px; }
.av, .aa { width: 30px; }
.aa { font-size: 12px; }
.g-para .lines { width: 187px; padding-left: 4px; }
.g-draw .body { padding-left: 4px; }
.gallery { display: flex; width: 128px; height: 59px; margin-top: 3px; border: 1px solid #b9bdc0; background: #fffffc; }
.shapes { display: grid; flex: 1; grid-template-columns: repeat(6, 19px); grid-template-rows: repeat(3, 19px); }
.shapes svg { width: 16px; height: 14px; fill: none; stroke: #666; }
.gscroll { display: flex; flex-direction: column; width: 13px; border-left: 1px solid #c5c8ca; }
.gscroll button { flex: 1; border-bottom: 1px solid #d5d6d3; }
.gscroll .off { background: #e2e3e0; }
.gscroll .off .caret { color: #bbb; }
.arrange { width: 49px; }
.quick { width: 38px; margin-right: 3px; }
.g-edit .stack { padding-left: 5px; }
.g-pdf .big { flex: 1; }
.collapse { margin-left: auto; align-self: flex-end; width: 28px; height: 16px; }

/* Workspace */
.work { position: relative; display: flex; flex: 1; min-height: 0; border-bottom: 1px solid #bfc0bc; }
.panel { width: 195px; border-right: 1px solid #b9bab7; padding: 16px 0 0 10px; }
.thumb-row { display: flex; margin-bottom: 15px; }
.num { width: 14px; font-size: 14px; line-height: 12px; }
.thumb { width: 148px; height: 85px; border: 1px solid #c5c6c2; background: #fffffc; align-items: flex-start; }
.mini { padding-top: 25px; font: 700 5px/9px "DejaVu Sans", sans-serif; color: #26334a; }
.sel .num { color: #c8503c; }
.sel .thumb { width: 152px; height: 88px; margin-left: -2px; border: 3px solid #d1695a; }
.canvas { flex: 1; display: flex; justify-content: center; padding: 11px 0 13px; margin-bottom: 2px; border-bottom: 1px solid #bfc0bc; }
.slide { position: relative; height: 100%; aspect-ratio: 16 / 9; background: #fffffc; border: 1px solid #cfd0cc; }
.textbox { position: absolute; left: 21.5%; top: 14%; width: 54.2%; height: 66.4%; border: 1px dotted #888; }
.copy { padding: 3px 6px; font: 13px/20px "Liberation Sans", "DejaVu Sans", sans-serif; color: #111; }
.copy p, .copy li { height: 20px; }
.copy .n { font-size: 16px; line-height: 16px; }
.copy ul { margin-top: 77px; padding-right: 20px; list-style: none; }
.copy li { position: relative; }
.copy li::before { content: "•"; position: absolute; right: -20px; font-size: 16px; }
.h { position: absolute; width: 11px; height: 11px; border: 2px solid #959593; border-radius: 50%; background: #fffffc; transform: translate(-50%, -50%); }
.tl, .tc, .tr { top: 0; } .ml, .mr { top: 50%; } .bl, .bc, .br { top: 100%; }
.tl, .ml, .bl { left: 0; } .tc, .bc { left: 50%; } .tr, .mr, .br { left: 100%; }
.rot { position: absolute; left: calc(50% - 12px); top: -43px; }
.scroll { width: 15px; padding-top: 1px; display: flex; flex-direction: column; align-items: stretch; }
.sbtn { height: 14px; border: 1px solid #b5b6b3; background: #fffffc; }
.track { flex: 1; display: flex; align-items: flex-end; }
.knob { width: 14px; height: 50%; border: 1px solid #b5b6b3; background: #fffffc; }
.jump { height: 16px; }
.jump:last-child { margin-bottom: 22px; }
.watermark { position: absolute; right: 61px; bottom: 11px; color: #bcbdba; pointer-events: none; }
.w1 { font-size: 18px; line-height: 24px; }
.w2 { font-size: 13px; line-height: 18px; }

/* Status bar */
.status { display: flex; flex: none; align-items: center; height: 21px; padding-left: 7px; background: #f0f1ed; color: #555; }
.spell { margin: 0 14px 0 16px; }
.sb { gap: 4px; }
.notes { margin-left: auto; }
.comm { margin: 0 16px 0 17px; }
.view { width: 35px; height: 21px; }
.zb { width: 13px; }
.view + .zb { margin-left: 2px; }
.zoom { appearance: none; width: 94px; height: 12px; margin: 0; background: linear-gradient(#aaa, #aaa) 50% 50% / 1px 5px no-repeat, linear-gradient(#aaa, #aaa) 0 50% / 100% 1px no-repeat; }
.zoom::-webkit-slider-thumb { appearance: none; width: 4px; height: 11px; background: #555; }
.pct { width: 30px; margin-left: 6px; }
.fit { width: 23px; padding-left: 4px; margin-right: 4px; }

/* Taskbar */
.taskbar { display: flex; flex: none; height: 37px; background: linear-gradient(90deg, #212a1e 0, #252b20 48%, #3e3a33 53%, #484242 68%, #2d3c39 78%, #1d3431 88%, #19302e 100%); color: #fff; }
.tb { width: 46px; border-bottom: 2px solid transparent; }
.tb.start { width: 45px; }
.search { display: flex; align-items: center; width: 322px; background: #f1f2ee; padding: 0 7px 0 11px; gap: 10px; border-bottom: 1px solid #aaa; }
.search input { flex: 1; min-width: 0; border: 0; padding: 0; background: none; outline: 0; font: 14px/20px "Open Sans", sans-serif; }
.search input::placeholder { color: #444; opacity: 1; }
.run { background: linear-gradient(#76b4df, #76b4df) 50% 100% / 38px 2px no-repeat border-box; }
.hot { background: #ad682f; border-bottom-color: #f0761c; }
.cur { background-color: #6a6664; background-size: 46px 2px; }
.tray { display: flex; margin-left: auto; margin-right: 4px; border-right: 1px solid #4c605d; }
.ti { width: 23px; }
.lang { width: 34px; font: 14px/20px "DejaVu Sans", sans-serif; }
.clock { display: flex; flex-direction: column; justify-content: center; align-items: center; width: 58px; line-height: 17px; font-size: 11px; }
.note { width: 46px; padding-right: 6px; }
```
